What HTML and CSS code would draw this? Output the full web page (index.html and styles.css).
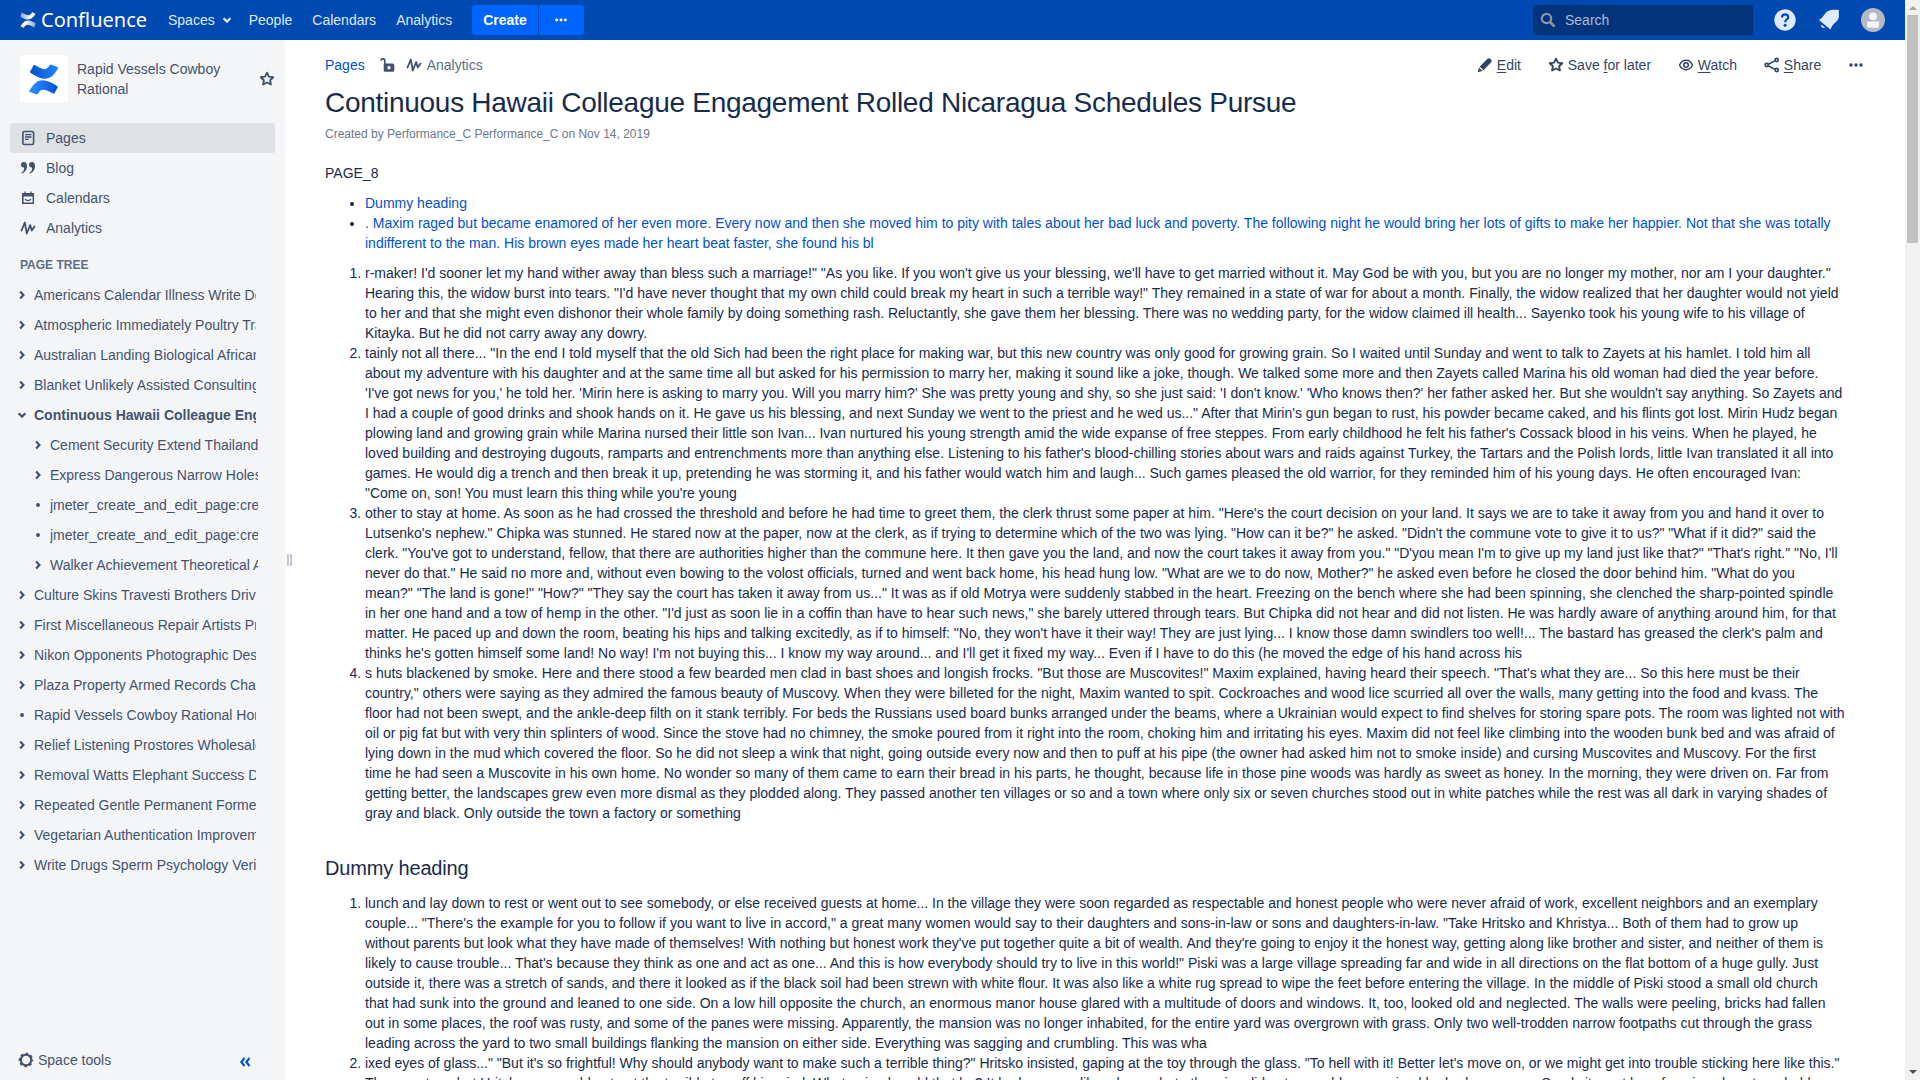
FILE: index.html
```html
<!DOCTYPE html>
<html lang="en">
<head>
<meta charset="utf-8">
<title>Continuous Hawaii Colleague Engagement - Confluence</title>
<link rel="stylesheet" href="styles.css">
</head>
<body>
<svg class="sprite" aria-hidden="true">
  <symbol id="star" viewBox="0 0 16 16"><path d="M8 1.700l1.900 3.900 4.300.6-3.100 3 .8 4.300L8 11.500 4.100 13.500l.8-4.300-3.100-3 4.300-.6z" fill="none" stroke="currentColor" stroke-width="1.900" stroke-linejoin="round"/></symbol>
  <symbol id="pulse" viewBox="0 0 16 16"><path d="M1.500 10.500L4.800 2.500 6.800 13.500 10.200 5 11.800 10.500 14.500 6.500" fill="none" stroke="currentColor" stroke-width="1.800" stroke-linecap="round" stroke-linejoin="round"/></symbol>
  <symbol id="chev" viewBox="0 0 10 10"><path d="M3.100 1.600L6.400 5 3.100 8.400" fill="none" stroke="currentColor" stroke-width="2.200"/></symbol>
  <symbol id="down" viewBox="0 0 10 10"><path d="M1.600 3.300L5 6.600 8.400 3.300" fill="none" stroke="currentColor" stroke-width="2.200"/></symbol>
  <symbol id="dot" viewBox="0 0 10 10"><circle cx="5" cy="5" r="2" fill="currentColor"/></symbol>
  <symbol id="dots" viewBox="0 0 16 16"><g fill="currentColor"><circle cx="3" cy="8" r="1.700"/><circle cx="8" cy="8" r="1.700"/><circle cx="13" cy="8" r="1.700"/></g></symbol>
</svg>
<div class="app">
<div class="page">
<header class="topbar">
  <a class="brand">
    <svg class="brand-mark" viewBox="0 0 16 16"><defs><linearGradient id="w1" x1="0" x2="1"><stop offset="0" stop-color="#fff" stop-opacity=".5"/><stop offset=".7" stop-color="#fff"/></linearGradient><linearGradient id="w2" x1="1" x2="0"><stop offset="0" stop-color="#fff" stop-opacity=".5"/><stop offset=".7" stop-color="#fff"/></linearGradient></defs><path d="M1.800.4L.2 4.400C6 8.600 11 9.400 15.600 1.800L12.200.2C9.500 4.600 7.500 3.600 1.800.4z" fill="url(#w1)"/><path d="M14.200 15.600L15.800 11.600C10 7.400 5 6.600 .4 14.200L3.800 15.800C6.500 11.400 8.500 12.400 14.200 15.600z" fill="url(#w2)"/></svg>
    <span class="brand-name">Confluence</span>
  </a>
  <nav class="nav"><a class="spaces">Spaces <svg width="10" height="10"><use href="#down"/></svg></a><a>People</a><a>Calendars</a><a>Analytics</a></nav>
  <div class="create"><span class="create-main">Create</span><span class="create-more"><svg width="14" height="14"><use href="#dots"/></svg></span></div>
  <div class="search"><svg width="16" height="16" viewBox="0 0 16 16"><circle cx="6.500" cy="6.500" r="4.700" fill="none" stroke="#8a94a4" stroke-width="2.200"/><path d="M10 10l4.500 4.500" stroke="#8a94a4" stroke-width="2.600"/></svg><span>Search</span></div>
  <svg class="help" width="22" height="22" viewBox="0 0 22 22"><circle cx="11" cy="11" r="10.700" fill="#deebff"/><path d="M8 8.600C8 4.200 14.400 4.400 14.200 8.300 14 10.500 11.100 10.600 11.100 13.200" fill="none" stroke="#0049b0" stroke-width="2.200"/><circle cx="11.100" cy="16.200" r="1.500" fill="#0049b0"/></svg>
  <svg class="bell" width="22" height="22" viewBox="0 0 22 22"><path d="M.7 10.700C4.500 9.500 5.500 6.500 8 3.500 11 .2 16 1 20 .8 21.200 1 21 2 20.800 3 21 7 21.500 10 18 13 15 15.500 13.500 17.500 12.400 20.600zM3.300 15.500l3.700 3c-2 1.500-4.500-.5-3.700-3z" fill="#deebff"/></svg>
  <svg class="avatar" width="24" height="24" viewBox="0 0 24 24"><circle cx="12" cy="12" r="12" fill="#b3bac5"/><circle cx="12" cy="8.300" r="3.900" fill="#f4f5f7"/><path d="M6 13.500h12v3.500c0 2-1 2.800-2.500 2.800h-7C7 19.800 6 19 6 17z" fill="#f4f5f7"/></svg>
</header>
<div class="body">
<aside class="sidebar">
  <div class="space">
    <div class="space-logo"><svg viewBox="0 0 28 32" preserveAspectRatio="none"><defs><linearGradient id="b1" x1="0" x2="1"><stop offset="0" stop-color="#0052cc"/><stop offset="1" stop-color="#2684ff"/></linearGradient><linearGradient id="b2" x1="1" x2="0"><stop offset="0" stop-color="#0052cc"/><stop offset=".8" stop-color="#2684ff"/></linearGradient></defs><path d="M4.800 1.500L2 7.600c-.4.800-.2 1.400.5 1.700C13 17.500 20 18.500 26.300 4.500c.3-.7.100-1.200-.5-1.500L20.500.7C19.500.4 19.200.9 18.800 1.600 15.500 7.500 12.500 5.500 6.300 1.400 5.700 1 5.200 1 4.800 1.500z" fill="url(#b1)"/><path d="M23 30.500l2.900-6.200c.3-.7.100-1.200-.5-1.600C14.500 14.500 8 13.500 1.300 27.500c-.3.700-.1 1.200.5 1.500l5.400 2.300c.8.300 1.200-.2 1.500-.8 3.300-6 6.500-4 12.800-.2.600.4 1.200.6 1.500.2z" fill="url(#b2)"/></svg></div>
    <div class="space-name">Rapid Vessels Cowboy Rational</div>
    <svg class="space-star" width="16" height="16"><use href="#star"/></svg>
  </div>
  <ul class="menu">
    <li class="active"><svg width="16" height="16" viewBox="0 0 16 16"><rect x="2.900" y="1.500" width="10.700" height="13" rx="1.500" fill="none" stroke="currentColor" stroke-width="1.600"/><path d="M5 4.700h6.500M5 7h6.500M5 9.300h3.500" stroke="currentColor" stroke-width="1.300"/></svg>Pages</li>
    <li><svg width="16" height="16" viewBox="0 0 16 16"><path id="q" d="M4 2C1.800 2 1 3.400 1 4.800 1 6.500 2.200 7.500 4 7.400 4.500 9.500 3.500 11.500 1.300 12.800L1.700 13.600C5 12.500 7 9.500 7 6 7 3.500 6 2 4 2z" fill="currentColor"/><use href="#q" x="8"/></svg>Blog</li>
    <li><svg width="16" height="16" viewBox="0 0 16 16"><path d="M2 3h12v11H2zM3.600 6.500v6h9v-6z" fill="currentColor" fill-rule="evenodd"/><path d="M5 1.500v2M11 1.500v2M5 9.300c1.500 1.700 4.500 1.700 6 0" stroke="currentColor" stroke-width="1.300" fill="none"/></svg>Calendars</li>
    <li><svg width="16" height="16"><use href="#pulse"/></svg>Analytics</li>
  </ul>
  <h5>PAGE TREE</h5>
  <ul class="tree">
    <li><svg><use href="#chev"/></svg><span>Americans Calendar Illness Write Down</span></li>
    <li><svg><use href="#chev"/></svg><span>Atmospheric Immediately Poultry Travel</span></li>
    <li><svg><use href="#chev"/></svg><span>Australian Landing Biological African</span></li>
    <li><svg><use href="#chev"/></svg><span>Blanket Unlikely Assisted Consulting</span></li>
    <li class="current"><svg><use href="#down"/></svg><span>Continuous Hawaii Colleague Engagement</span></li>
    <li class="child"><svg><use href="#chev"/></svg><span>Cement Security Extend Thailand</span></li>
    <li class="child"><svg><use href="#chev"/></svg><span>Express Dangerous Narrow Holes</span></li>
    <li class="child"><svg><use href="#dot"/></svg><span>jmeter_create_and_edit_page:create</span></li>
    <li class="child"><svg><use href="#dot"/></svg><span>jmeter_create_and_edit_page:create</span></li>
    <li class="child"><svg><use href="#chev"/></svg><span>Walker Achievement Theoretical A</span></li>
    <li><svg><use href="#chev"/></svg><span>Culture Skins Travesti Brothers Driv</span></li>
    <li><svg><use href="#chev"/></svg><span>First Miscellaneous Repair Artists Pr</span></li>
    <li><svg><use href="#chev"/></svg><span>Nikon Opponents Photographic Des</span></li>
    <li><svg><use href="#chev"/></svg><span>Plaza Property Armed Records Cha</span></li>
    <li><svg><use href="#dot"/></svg><span>Rapid Vessels Cowboy Rational Home</span></li>
    <li><svg><use href="#chev"/></svg><span>Relief Listening Prostores Wholesale</span></li>
    <li><svg><use href="#chev"/></svg><span>Removal Watts Elephant Success D</span></li>
    <li><svg><use href="#chev"/></svg><span>Repeated Gentle Permanent Forme</span></li>
    <li><svg><use href="#chev"/></svg><span>Vegetarian Authentication Improvement</span></li>
    <li><svg><use href="#chev"/></svg><span>Write Drugs Sperm Psychology Veri</span></li>
  </ul>
  <div class="side-foot">
    <svg width="16" height="16" viewBox="0 0 16 16"><circle cx="8" cy="8" r="5.200" fill="none" stroke="currentColor" stroke-width="2"/><circle cx="8" cy="8" r="6.300" fill="none" stroke="currentColor" stroke-width="2" stroke-dasharray="2.800 2.148" stroke-dashoffset="1.400"/></svg>
    <span>Space tools</span>
    <svg class="collapse" width="12" height="12" viewBox="0 0 12 12"><path d="M5.500 2L2.300 6l3.200 4M10.500 2L7.300 6l3.200 4" fill="none" stroke="#0052cc" stroke-width="2.100"/></svg>
  </div>
</aside>
<div class="splitter"><i></i><i></i></div>
<main class="main">
  <div class="toolbar">
    <a class="crumb">Pages</a>
    <svg class="lock" width="16" height="16" viewBox="0 0 16 16"><path d="M4.800 7V4.200C4.800.8 1.200 1 1.200 3.800" fill="none" stroke="currentColor" stroke-width="1.700"/><path d="M4.500 6.500h8.300a1.500 1.500 0 0 1 1.500 1.500v5.200a1.500 1.500 0 0 1-1.500 1.500H5.200a1.500 1.500 0 0 1-1.500-1.500V6.500zM9 8.900a1.700 1.700 0 1 0 .01 0z" fill="currentColor" fill-rule="evenodd"/></svg>
    <svg class="pulse" width="16" height="16"><use href="#pulse"/></svg><span class="analytics">Analytics</span>
    <div class="actions">
      <a><svg width="16" height="16" viewBox="0 0 16 16"><path d="M.8 15.200L2 10.500 5.500 14zM2.700 9.500L10 2.200c1-1 2-1.500 3-.6l1.200 1.200c.9 1 .5 2-.5 3L6.500 13.200z" fill="currentColor"/></svg><span><u>E</u>dit</span></a>
      <a><svg width="16" height="16"><use href="#star"/></svg><span>Save <u>f</u>or later</span></a>
      <a><svg width="16" height="16" viewBox="0 0 16 16"><path d="M1.500 8C4.500 1.700 11.500 1.700 14.500 8 11.500 14.300 4.500 14.300 1.500 8z" fill="none" stroke="currentColor" stroke-width="1.500"/><circle cx="8" cy="8" r="2.300" fill="none" stroke="currentColor" stroke-width="1.500"/></svg><span><u>W</u>atch</span></a>
      <a><svg width="16" height="16" viewBox="0 0 16 16"><g fill="none" stroke="currentColor" stroke-width="1.600"><path d="M4.300 7.200L11 3.900M4.300 8.800l6.700 3.600"/><circle cx="2.700" cy="8" r="1.600"/><circle cx="12.700" cy="3" r="1.600"/><circle cx="12.700" cy="13" r="1.600"/></g></svg><span><u>S</u>hare</span></a>
      <a><svg width="16" height="16"><use href="#dots"/></svg></a>
    </div>
  </div>
  <h1>Continuous Hawaii Colleague Engagement Rolled Nicaragua Schedules Pursue</h1>
  <p class="meta">Created by Performance_C Performance_C on Nov 14, 2019</p>
  <div class="content">
  <p>PAGE_8</p>
  <ul class="toc">
    <li><a>Dummy heading</a></li>
    <li><a>. Maxim raged but became enamored of her even more. Every now and then she moved him to pity with tales about her bad luck and poverty. The following night he would bring her lots of gifts to make her happier. Not that she was totally indifferent to the man. His brown eyes made her heart beat faster, she found his bl</a></li>
  </ul>
  <ol>
    <li>r-maker! I'd sooner let my hand wither away than bless such a marriage!" "As you like. If you won't give us your blessing, we'll have to get married without it. May God be with you, but you are no longer my mother, nor am I your daughter." Hearing this, the widow burst into tears. "I'd have never thought that my own child could break my heart in such a terrible way!" They remained in a state of war for about a month. Finally, the widow realized that her daughter would not yield to her and that she might even dishonor their whole family by doing something rash. Reluctantly, she gave them her blessing. There was no wedding party, for the widow claimed ill health... Sayenko took his young wife to his village of Kitayka. But he did not carry away any dowry.</li>
    <li>tainly not all there... "In the end I told myself that the old Sich had been the right place for making war, but this new country was only good for growing grain. So I waited until Sunday and went to talk to Zayets at his hamlet. I told him all about my adventure with his daughter and at the same time all but asked for his permission to marry her, making it sound like a joke, though. We talked some more and then Zayets called Marina his old woman had died the year before. 'I've got news for you,' he told her. 'Mirin here is asking to marry you. Will you marry him?' She was pretty young and shy, so she just said: 'I don't know.' 'Who knows then?' her father asked her. But she wouldn't say anything. So Zayets and I had a couple of good drinks and shook hands on it. He gave us his blessing, and next Sunday we went to the priest and he wed us..." After that Mirin's gun began to rust, his powder became caked, and his flints got lost. Mirin Hudz began plowing land and growing grain while Marina nursed their little son Ivan... Ivan nurtured his young strength amid the wide expanse of free steppes. From early childhood he felt his father's Cossack blood in his veins. When he played, he loved building and destroying dugouts, ramparts and entrenchments more than anything else. Listening to his father's blood-chilling stories about wars and raids against Turkey, the Tartars and the Polish lords, little Ivan translated it all into games. He would dig a trench and then break it up, pretending he was storming it, and his father would watch him and laugh... Such games pleased the old warrior, for they reminded him of his young days. He often encouraged Ivan: "Come on, son! You must learn this thing while you're young</li>
    <li>other to stay at home. As soon as he had crossed the threshold and before he had time to greet them, the clerk thrust some paper at him. "Here's the court decision on your land. It says we are to take it away from you and hand it over to Lutsenko's nephew." Chipka was stunned. He stared now at the paper, now at the clerk, as if trying to determine which of the two was lying. "How can it be?" he asked. "Didn't the commune vote to give it to us?" "What if it did?" said the clerk. "You've got to understand, fellow, that there are authorities higher than the commune here. It then gave you the land, and now the court takes it away from you." "D'you mean I'm to give up my land just like that?" "That's right." "No, I'll never do that." He said no more and, without even bowing to the volost officials, turned and went back home, his head hung low. "What are we to do now, Mother?" he asked even before he closed the door behind him. "What do you mean?" "The land is gone!" "How?" "They say the court has taken it away from us..." It was as if old Motrya were suddenly stabbed in the heart. Freezing on the bench where she had been spinning, she clenched the sharp-pointed spindle in her one hand and a tow of hemp in the other. "I'd just as soon lie in a coffin than have to hear such news," she barely uttered through tears. But Chipka did not hear and did not listen. He was hardly aware of anything around him, for that matter. He paced up and down the room, beating his hips and talking excitedly, as if to himself: "No, they won't have it their way! They are just lying... I know those damn swindlers too well!... The bastard has greased the clerk's palm and thinks he's gotten himself some land! No way! I'm not buying this... I know my way around... and I'll get it fixed my way... Even if I have to do this (he moved the edge of his hand across his</li>
    <li>s huts blackened by smoke. Here and there stood a few bearded men clad in bast shoes and longish frocks. "But those are Muscovites!" Maxim explained, having heard their speech. "That's what they are... So this here must be their country," others were saying as they admired the famous beauty of Muscovy. When they were billeted for the night, Maxim wanted to spit. Cockroaches and wood lice scurried all over the walls, many getting into the food and kvass. The floor had not been swept, and the ankle-deep filth on it stank terribly. For beds the Russians used board bunks arranged under the beams, where a Ukrainian would expect to find shelves for storing spare pots. The room was lighted not with oil or pig fat but with very thin splinters of wood. Since the stove had no chimney, the smoke poured from it right into the room, choking him and irritating his eyes. Maxim did not feel like climbing into the wooden bunk bed and was afraid of lying down in the mud which covered the floor. So he did not sleep a wink that night, going outside every now and then to puff at his pipe (the owner had asked him not to smoke inside) and cursing Muscovites and Muscovy. For the first time he had seen a Muscovite in his own home. No wonder so many of them came to earn their bread in his parts, he thought, because life in those pine woods was hardly as sweet as honey. In the morning, they were driven on. Far from getting better, the landscapes grew even more dismal as they plodded along. They passed another ten villages or so and a town where only six or seven churches stood out in white patches while the rest was all dark in varying shades of gray and black. Only outside the town a factory or something</li>
  </ol>
  <h2>Dummy heading</h2>
  <ol>
    <li>lunch and lay down to rest or went out to see somebody, or else received guests at home... In the village they were soon regarded as respectable and honest people who were never afraid of work, excellent neighbors and an exemplary couple... "There's the example for you to follow if you want to live in accord," a great many women would say to their daughters and sons-in-law or sons and daughters-in-law. "Take Hritsko and Khristya... Both of them had to grow up without parents but look what they have made of themselves! With nothing but honest work they've put together quite a bit of wealth. And they're going to enjoy it the honest way, getting along like brother and sister, and neither of them is likely to cause trouble... That's because they think as one and act as one... And this is how everybody should try to live in this world!" Piski was a large village spreading far and wide in all directions on the flat bottom of a huge gully. Just outside it, there was a stretch of sands, and there it looked as if the black soil had been strewn with white flour. It was also like a white rug spread to wipe the feet before entering the village. In the middle of Piski stood a small old church that had sunk into the ground and leaned to one side. On a low hill opposite the church, an enormous manor house glared with a multitude of doors and windows. It, too, looked old and neglected. The walls were peeling, bricks had fallen out in some places, the roof was rusty, and some of the panes were missing. Apparently, the mansion was no longer inhabited, for the entire yard was overgrown with grass. Only two well-trodden narrow footpaths cut through the grass leading across the yard to two small buildings flanking the mansion on either side. Everything was sagging and crumbling. This was wha</li>
    <li>ixed eyes of glass..." "But it's so frightful! Why should anybody want to make such a terrible thing?" Hritsko insisted, gaping at the toy through the glass. "To hell with it! Better let's move on, or we might get into trouble sticking here like this." They went on, but Hritsko now could not get the terrible toy off his mind. What animal could that be? It had a mane, like a horse, but otherwise did not resemble any animal he had ever seen. Surely it must be a ferocious beast, probably</li>
  </ol>
  </div>
</main>
</div>
</div>
<div class="scroll"><i class="up"></i><i class="thumb"></i><i class="dn"></i></div>
</div>
</body>
</html>
```
FILE: styles.css
```css
* { box-sizing: border-box; }
body { margin: 0; font: 14px/20px "Liberation Sans", Arial, sans-serif; color: #172b4d; background: #fff; }
ul, ol, p, h1, h2, h5 { margin: 0; padding: 0; }
svg { flex: none; }
.sprite { display: none; }
.app { display: flex; width: 1920px; height: 1080px; overflow: hidden; }
.page { flex: 1; display: flex; flex-direction: column; min-width: 0; }
.topbar { display: flex; align-items: center; height: 40px; flex: none; background: #0049b0; color: #deebff; padding: 0 20px; }
.brand { display: flex; align-items: center; width: 138px; gap: 5px; }
.brand-mark { width: 16px; height: 16px; }
.brand-name { font: 20px/24px "Noto Sans", sans-serif; color: #fff; }
.nav { display: flex; gap: 20px; width: 304px; padding-left: 10px; white-space: nowrap; }
.spaces { display: flex; align-items: center; gap: 7px; margin-right: -3px; }
.create { display: flex; gap: 1px; color: #fff; font-weight: 700; height: 30px; line-height: 30px; margin-left: 10px; }
.create-main { width: 66px; background: #0065ff; text-align: center; border-radius: 3px 0 0 3px; }
.create-more { width: 45px; padding-right: 1px; background: #0065ff; display: flex; align-items: center; justify-content: center; border-radius: 0 3px 3px 0; }
.search { display: flex; align-items: center; gap: 9px; width: 220px; height: 30px; margin-left: auto; padding-left: 7px; background: #03347b; color: #a7bbd9; border-radius: 3px; }
.help { margin-left: 21px; }
.bell { margin-left: 22px; }
.avatar { margin: 0 0 0 21px; }
.body { flex: 1; display: flex; min-height: 0; }
.sidebar { width: 285px; flex: none; display: flex; flex-direction: column; background: #f4f5f7; color: #42526e; }
.space { display: flex; align-items: center; padding: 15px 10px 0 20px; }
.space-logo { width: 48px; height: 48px; background: #fff; border-radius: 3px; display: grid; place-items: center; }
.space-logo svg { width: 32px; height: 31px; }
.space-name { flex: 1; padding: 0 20px 0 9px; }
.menu { list-style: none; margin: 20px 10px 0; }
.menu li { display: flex; align-items: center; gap: 10px; height: 30px; padding-left: 10px; border-radius: 3px; }
.menu li.active { background: #dfe1e5; }
h5 { font-size: 12px; line-height: 20px; color: #5e6c84; margin: 12px 20px 5px; }
.tree { list-style: none; padding-left: 17px; }
.tree li { display: flex; align-items: center; gap: 7px; height: 30px; width: 239px; }
.tree li.child { padding-left: 16px; width: 241px; }
.tree span { flex: 1; overflow: hidden; white-space: nowrap; }
.tree svg { width: 10px; height: 10px; }
.current { font-weight: 700; }
.side-foot { display: flex; align-items: center; height: 40px; margin-top: auto; padding: 0 0 0 18px; gap: 4px; }
.side-foot .collapse { margin-left: 124px; margin-top: 3px; }
.splitter { width: 10px; flex: none; display: flex; padding-left: 2px; align-items: center; gap: 1px; margin-right: 30px; }
.splitter i { width: 2px; height: 12px; background: #c1c7d0; }
.main { flex: 1; min-width: 0; padding-right: 40px; }
.toolbar { display: flex; align-items: center; height: 50px; color: #42526e; }
.crumb, .toc a { color: #0052cc; }
.lock { margin-left: 15px; }
.pulse { margin-left: 10px; }
.analytics { margin-left: 5px; color: #5e6c84; }
.actions { display: flex; gap: 26.8px; margin-left: auto; padding-right: 1px; color: #344563; }
.actions a { display: flex; align-items: center; gap: 4px; }
u { text-underline-offset: 2px; }
h1 { font-size: 28px; line-height: 32px; font-weight: 400; letter-spacing: -.28px; margin-top: -3px; }
.meta { font-size: 12px; color: #6b778c; margin-top: 5px; }
.content { width: 1520px; margin-top: 19px; }
.content ul, .content ol { padding-left: 40px; margin-top: 10px; }
h2 { font-size: 20px; line-height: 30px; font-weight: 400; letter-spacing: -.16px; margin-top: 30px; }
.scroll { width: 15px; display: flex; flex-direction: column; align-items: center; background: #f1f1f1; }
.up { border: 4px solid transparent; border-top: 0; border-bottom: 4px solid #a3a3a3; margin-top: 6px; }
.thumb { width: 11px; height: 228px; background: #c1c1c1; margin-top: 5px; }
.dn { border: 4px solid transparent; border-bottom: 0; border-top: 4px solid #505050; margin: auto 0 6px; }
```
